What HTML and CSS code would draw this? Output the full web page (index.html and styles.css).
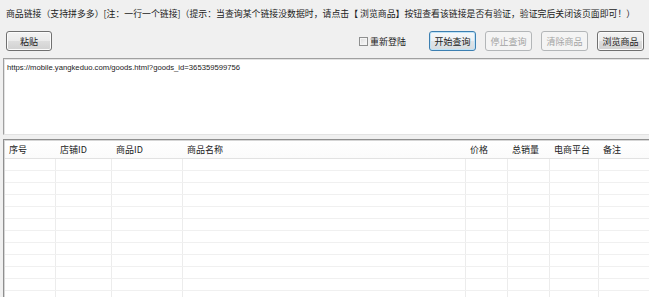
FILE: index.html
```html
<!DOCTYPE html>
<html lang="zh-CN">
<head>
<meta charset="utf-8">
<title>商品查询</title>
<link rel="stylesheet" href="styles.css">
</head>
<body>
<div class="app">
  <div class="hint">商品链接（支持拼多多）[注：一行一个链接]（提示：当查询某个链接没数据时，请点击【 浏览商品】按钮查看该链接是否有验证，验证完后关闭该页面即可！）</div>
  <div class="toolbar">
    <button class="btn">粘贴</button>
    <div class="spacer"></div>
    <label class="check"><span class="box"></span>重新登陆</label>
    <button class="btn primary">开始查询</button>
    <button class="btn" disabled>停止查询</button>
    <button class="btn" disabled>清除商品</button>
    <button class="btn">浏览商品</button>
  </div>
  <div class="input"><span class="url">https://mobile.yangkeduo.com/goods.html?goods_id=365359599756</span></div>
  <div class="grid">
    <div class="row head">
      <div class="c">序号</div><div class="c">店铺ID</div><div class="c">商品ID</div><div class="c">商品名称</div><div class="c">价格</div><div class="c">总销量</div><div class="c">电商平台</div><div class="c">备注</div>
    </div>
    <div class="row"><div class="c"></div><div class="c"></div><div class="c"></div><div class="c"></div><div class="c"></div><div class="c"></div><div class="c"></div><div class="c"></div></div>
    <div class="row"><div class="c"></div><div class="c"></div><div class="c"></div><div class="c"></div><div class="c"></div><div class="c"></div><div class="c"></div><div class="c"></div></div>
    <div class="row"><div class="c"></div><div class="c"></div><div class="c"></div><div class="c"></div><div class="c"></div><div class="c"></div><div class="c"></div><div class="c"></div></div>
    <div class="row"><div class="c"></div><div class="c"></div><div class="c"></div><div class="c"></div><div class="c"></div><div class="c"></div><div class="c"></div><div class="c"></div></div>
    <div class="row"><div class="c"></div><div class="c"></div><div class="c"></div><div class="c"></div><div class="c"></div><div class="c"></div><div class="c"></div><div class="c"></div></div>
    <div class="row"><div class="c"></div><div class="c"></div><div class="c"></div><div class="c"></div><div class="c"></div><div class="c"></div><div class="c"></div><div class="c"></div></div>
    <div class="row"><div class="c"></div><div class="c"></div><div class="c"></div><div class="c"></div><div class="c"></div><div class="c"></div><div class="c"></div><div class="c"></div></div>
    <div class="row"><div class="c"></div><div class="c"></div><div class="c"></div><div class="c"></div><div class="c"></div><div class="c"></div><div class="c"></div><div class="c"></div></div>
    <div class="row"><div class="c"></div><div class="c"></div><div class="c"></div><div class="c"></div><div class="c"></div><div class="c"></div><div class="c"></div><div class="c"></div></div>
    <div class="row"><div class="c"></div><div class="c"></div><div class="c"></div><div class="c"></div><div class="c"></div><div class="c"></div><div class="c"></div><div class="c"></div></div>
    <div class="row"><div class="c"></div><div class="c"></div><div class="c"></div><div class="c"></div><div class="c"></div><div class="c"></div><div class="c"></div><div class="c"></div></div>
    <div class="row"><div class="c"></div><div class="c"></div><div class="c"></div><div class="c"></div><div class="c"></div><div class="c"></div><div class="c"></div><div class="c"></div></div>
  </div>
</div>
</body>
</html>
```

FILE: styles.css
```css
html, body {
  margin: 0;
  padding: 0;
  background: #f0f0f0;
  overflow: hidden;
  height: 297px;
}
body {
  font-family: "Noto Sans CJK SC", "Liberation Sans", sans-serif;
  font-size: 9px;
  color: #222;
}
.app {
  width: 649px;
  height: 297px;
  overflow: hidden;
}
.hint {
  height: 28px;
  line-height: 28px;
  padding-left: 6px;
  white-space: nowrap;
  overflow: hidden;
  font-size: 8.9px;
}
.toolbar {
  display: flex;
  align-items: center;
  height: 20px;
  margin-top: 3px;
  padding: 0 5px 0 6px;
  gap: 9px;
}
.spacer {
  flex: 1;
}
.btn {
  width: 46px;
  height: 20px;
  padding: 0;
  box-sizing: border-box;
  font-family: inherit;
  font-size: 9px;
  color: #222;
  border: 1px solid #707070;
  border-radius: 3px;
  background: linear-gradient(#f3f3f3 0%, #ebebeb 50%, #dddddd 51%, #d1d1d1 100%);
  box-shadow: inset 0 0 0 1px #fbfbfb;
}
.btn.primary {
  width: 47px;
  border-color: #3c7fb1;
  box-shadow: inset 0 0 0 1px #bfe3f7;
  background: linear-gradient(#f6f9fb 0%, #ecf0f3 50%, #dfe4e8 51%, #d6dce0 100%);
}
.btn[disabled] {
  width: 47px;
  color: #a3a3a3;
  border-color: #b3b6b8;
  background: #f4f4f4;
  box-shadow: none;
}
.btn:last-child {
  width: 47px;
}
.check {
  display: flex;
  align-items: center;
  gap: 2px;
  margin-right: 14px;
}
.box {
  width: 9px;
  height: 9px;
  box-sizing: border-box;
  border: 1px solid #8e8f8f;
  background: linear-gradient(135deg, #dcdcdc, #fbfbfb);
  box-shadow: inset 0 0 0 1px #f4f4f4;
}
.input {
  margin: 7px -4px 0 3px;
  height: 77px;
  box-sizing: border-box;
  border-top: 1px solid #a0a0a0;
  border-left: 1px solid #a0a0a0;
  border-bottom: 1px solid #e3e3e3;
  background: #fff;
  box-shadow: inset 1px 1px 0 #e3e3e3;
  padding: 1px 0 0 3px;
}
.url {
  font-family: "Liberation Sans", sans-serif;
  font-size: 7.7px;
  line-height: 10px;
  color: #222;
}
.grid {
  margin: 4px -4px 0 3px;
  height: 200px;
  box-sizing: border-box;
  border-top: 1px solid #8f8f8f;
  border-left: 1px solid #8f8f8f;
  box-shadow: inset 1px 1px 0 #d6d6d6;
  background: #fff;
  padding: 1px 0 0 1px;
  overflow: hidden;
}
.row {
  display: grid;
  grid-template-columns: 51px 56px 71px 283px 42px 42px 49px 1fr;
  height: 12px;
  box-sizing: border-box;
  border-bottom: 1px solid #f0f0f0;
}
.row .c {
  border-right: 1px solid #ececec;
}
.row.head {
  height: 18px;
  border-bottom: 1px solid #e2e2e2;
  background: linear-gradient(#ffffff, #fbfbfb);
}
.row.head .c {
  border-right: none;
  padding-left: 4px;
  line-height: 17px;
  white-space: nowrap;
}
```
